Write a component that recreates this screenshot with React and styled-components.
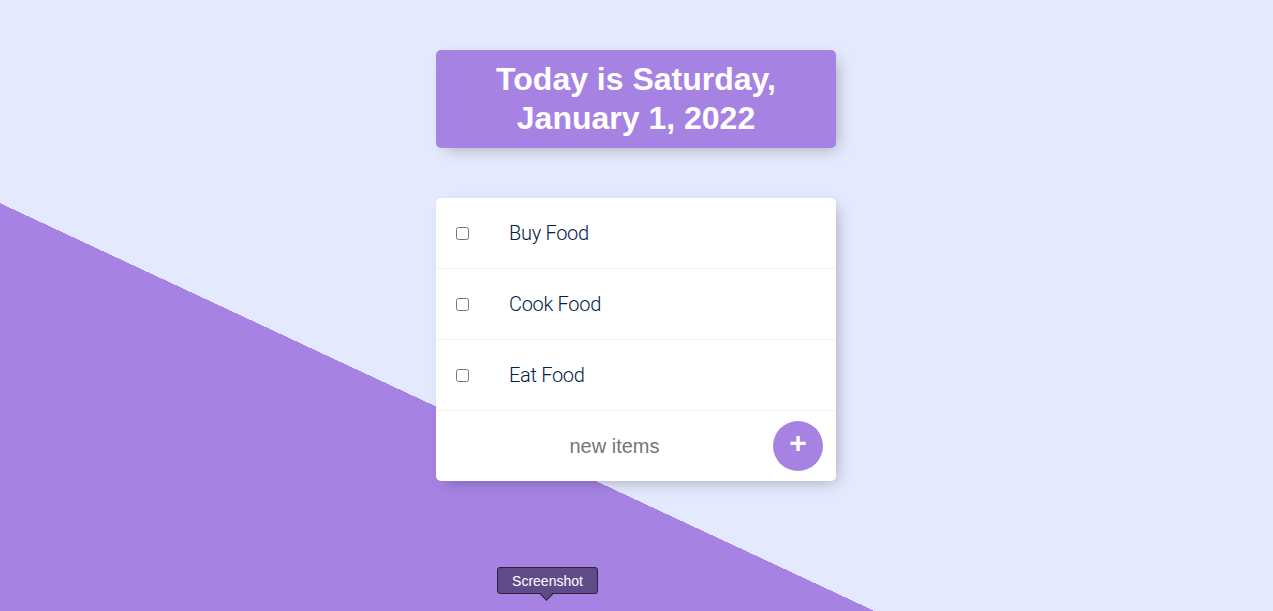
import React from "react";
import styled, { createGlobalStyle } from "styled-components";

const Global = createGlobalStyle`
  html {
    background-color: #E4E9FD;
    background-image: linear-gradient(25deg, #A683E3 50%, #E4E9FD 50%);
    background-size: 100% 1000px;
    background-repeat: no-repeat;
  }
  body {
    margin: 0;
    font-family: "Liberation Sans", Arial, sans-serif;
  }
`;

const Page = styled.div`
  display: flex;
  flex-direction: column;
  align-items: center;
  gap: 50px;
  padding: 50px 1px 0 0;
  height: 611px;
  box-sizing: border-box;
  overflow: hidden;
`;

const Box = styled.div`
  width: 400px;
  background: ${(p) => (p.$heading ? "#A683E3" : "#fff")};
  border-radius: 5px;
  box-shadow: 5px 5px 15px -5px rgba(0, 0, 0, 0.3);
  text-align: ${(p) => (p.$heading ? "center" : "left")};
`;

const Title = styled.h1`
  margin: 0;
  padding: 10px;
  color: #fff;
  font-family: "Liberation Sans", Arial, sans-serif;
  font-weight: 700;
  font-size: 32px;
  line-height: 39px;
`;

const Item = styled.div`
  min-height: 70px;
  display: flex;
  align-items: center;
  border-bottom: ${(p) => (p.$last ? "0" : "1px solid #F1F1F1")};
`;

const Check = styled.input`
  margin: 20px;
  width: 13px;
  height: 13px;
`;

const Label = styled.p`
  margin: 0;
  padding: 20px;
  font-family: Roboto, "Liberation Sans", sans-serif;
  font-size: 20px;
  font-weight: 300;
  letter-spacing: -0.3px;
  color: #00204a;
`;

const Form = styled.form`
  display: flex;
  align-items: center;
  min-height: 70px;
  margin-left: 20px;
`;

const TextInput = styled.input`
  width: 313px;
  height: 60px;
  padding: 1px 2px;
  border: none;
  outline: none;
  text-align: center;
  font-family: "Liberation Sans", Arial, sans-serif;
  font-size: 20px;
  background: transparent;
  &::placeholder {
    color: #757575;
  }
`;

const AddButton = styled.button`
  width: 50px;
  height: 50px;
  border-radius: 50%;
  border: 0;
  padding: 0 0 6px;
  background-color: #A683E3;
  color: #fff;
  font-family: "Liberation Sans", Arial, sans-serif;
  font-size: 30px;
  font-weight: 700;
  line-height: 1;
  display: flex;
  align-items: center;
  justify-content: center;
`;

const Tooltip = styled.div`
  position: absolute;
  left: 497px;
  top: 567px;
  width: 101px;
  height: 27px;
  box-sizing: border-box;
  border: 1px solid #2c2240;
  border-radius: 3px;
  background: #5f4b88;
  color: #fff;
  font-family: "Liberation Sans", Arial, sans-serif;
  font-size: 14px;
  display: flex;
  align-items: center;
  justify-content: center;
  &::after {
    content: "";
    position: absolute;
    left: 44px;
    bottom: -6px;
    width: 8px;
    height: 8px;
    background: #5f4b88;
    border-right: 1px solid #2c2240;
    border-bottom: 1px solid #2c2240;
    transform: rotate(45deg);
  }
`;

const items = ["Buy Food", "Cook Food", "Eat Food"];

export default function App() {
  return (
    <>
      <Global />
      <Page>
        <Box $heading>
          <Title>
            Today is Saturday,
            <br />
            January 1, 2022
          </Title>
        </Box>
        <Box>
          {items.map((t) => (
            <Item key={t}>
              <Check type="checkbox" />
              <Label>{t}</Label>
            </Item>
          ))}
          <Form onSubmit={(e) => e.preventDefault()}>
            <TextInput type="text" placeholder="new items" />
            <AddButton type="submit">+</AddButton>
          </Form>
        </Box>
      </Page>
      <Tooltip>Screenshot</Tooltip>
    </>
  );
}
